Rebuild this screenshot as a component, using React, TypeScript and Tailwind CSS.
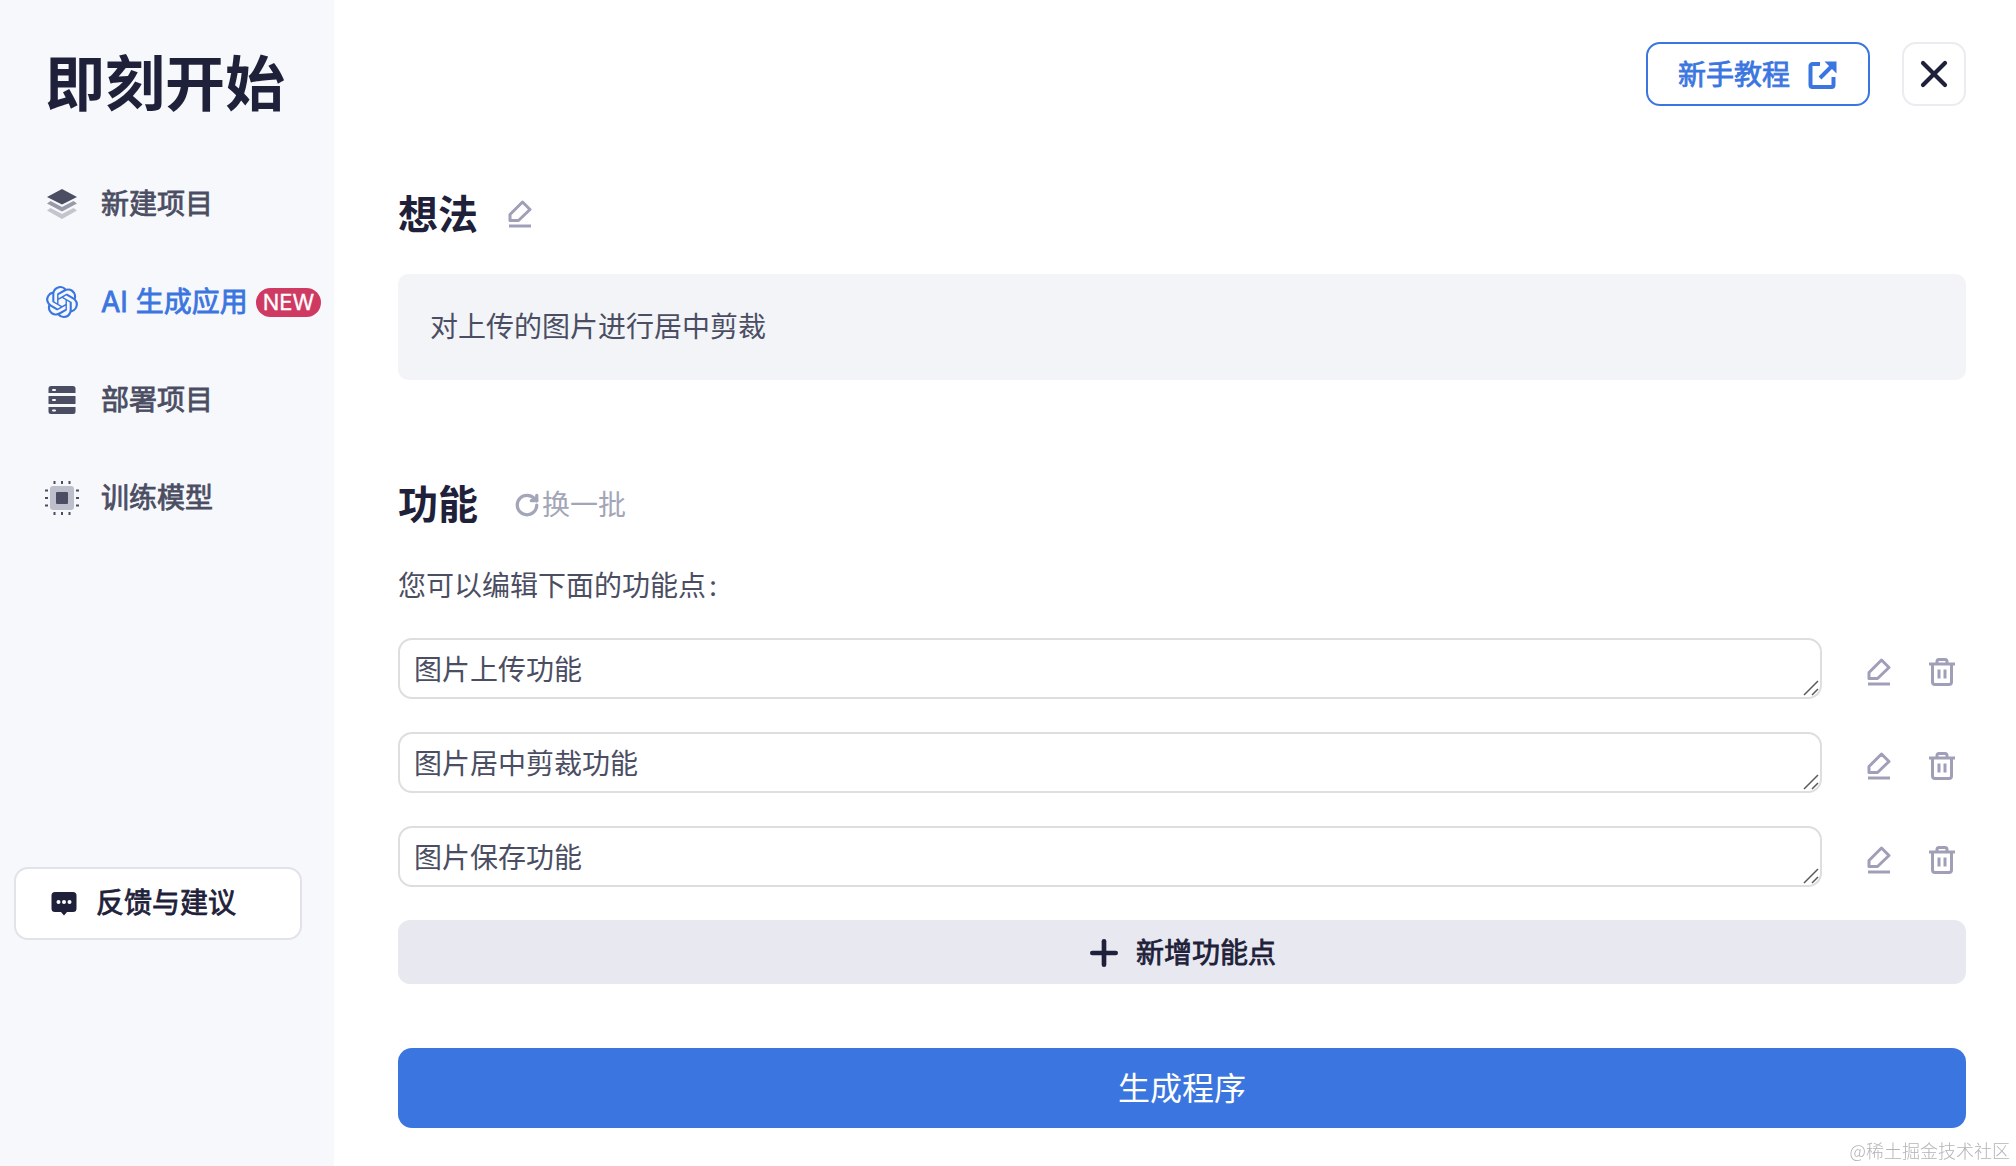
import { RotateCw, X, Plus } from 'lucide-react'
import { SiOpenai } from 'react-icons/si'

const font = { cjk: "font-['Inter','Noto_Sans_CJK_SC',sans-serif]" }
const medium = '[-webkit-text-stroke:0.8px_currentColor]'

function LayersIcon() {
  return (
    <svg width="32" height="32" viewBox="0 0 32 32" fill="#4b4e63">
      <path d="M16 1 31 9 16 16.500 1 9z" />
      <path d="M4.500 13 16 19 27.500 13 31 15.500 16 23.500 1 15.500z" opacity="0.55" />
      <path d="M4.500 20 16 26 27.500 20 31 22.500 16 31 1 22.500z" opacity="0.3" />
    </svg>
  )
}

function ServerIcon() {
  return (
    <svg width="28" height="30" viewBox="0 0 28 30" fill="#4b4e63">
      <path d="M3 1h22a2.500 2.500 0 0 1 2.500 2.500V8H.5V3.500A2.500 2.500 0 0 1 3 1z" />
      <rect x="0.500" y="11" width="27" height="8" />
      <path d="M.5 22h27v4.500A2.500 2.500 0 0 1 25 29H3a2.500 2.500 0 0 1-2.500-2.500z" />
      <g fill="#f7f8fb">
        <rect x="4" y="4" width="4" height="2" rx="1" />
        <rect x="4" y="14" width="4" height="2" rx="1" />
        <rect x="4" y="24.500" width="4" height="2" rx="1" />
      </g>
    </svg>
  )
}

function ChipIcon() {
  return (
    <svg width="34" height="34" viewBox="0 0 34 34">
      <rect x="5" y="5" width="24" height="24" rx="3" fill="#bdbfcb" />
      <rect x="11" y="11" width="12" height="12" rx="1" fill="#4b4e63" />
      <g stroke="#4b4e63" strokeWidth="2">
        <path d="M9.500 0v3M17 0v3M24.500 0v3M9.500 31v3M17 31v3M24.500 31v3M0 9.500h3M0 17h3M0 24.500h3M31 9.500h3M31 17h3M31 24.500h3" />
      </g>
    </svg>
  )
}

function ChatIcon() {
  return (
    <svg width="26" height="26" viewBox="0 0 26 26">
      <path d="M4 2h18a3.500 3.500 0 0 1 3.500 3.500v13A3.500 3.500 0 0 1 22 22h-6l-3 3.500L10 22H4a3.500 3.500 0 0 1-3.500-3.500v-13A3.500 3.500 0 0 1 4 2z" fill="#1e2139" />
      <circle cx="7.500" cy="12" r="2" fill="#fff" />
      <circle cx="13" cy="12" r="2" fill="#fff" />
      <circle cx="18.500" cy="12" r="2" fill="#fff" />
    </svg>
  )
}

function ExternalIcon() {
  return (
    <svg width="30" height="30" viewBox="0 0 30 30" fill="none" stroke="#3b76e0" strokeWidth="4">
      <path d="M12 4H4.500a2 2 0 0 0-2 2v19a2 2 0 0 0 2 2h19a2 2 0 0 0 2-2V17" />
      <path d="M12 18 25 5" />
      <path d="M16.500 1.500h12v12z" fill="#3b76e0" stroke="none" />
    </svg>
  )
}

function PencilIcon() {
  return (
    <svg width="24" height="28" viewBox="0 0 24 28" fill="none" stroke="#a09fb8" strokeWidth="3">
      <path d="M2 20.500v-6L14.500 2l7.500 7.500L10.500 20.500z" strokeLinejoin="round" />
      <path d="M1 26h22" />
    </svg>
  )
}

function TrashIcon() {
  return (
    <svg width="26" height="28" viewBox="0 0 26 28" fill="none" stroke="#a09fb8" strokeWidth="3">
      <path d="M0 6h26" />
      <path d="M8 6V3.500A2 2 0 0 1 10 1.500h6a2 2 0 0 1 2 2V6" />
      <path d="M3.500 6v18a2.500 2.500 0 0 0 2.500 2.500h14a2.500 2.500 0 0 0 2.500-2.500V6" />
      <path d="M10 11.500v9M16 11.500v9" />
    </svg>
  )
}

function ResizeGrip() {
  return (
    <svg width="16" height="16" viewBox="0 0 16 16" stroke="#5a5a5a" strokeWidth="1.500" className="pointer-events-none absolute bottom-[3px] right-[3px]">
      <path d="M1 15 15 1M9 15l6-6" />
    </svg>
  )
}

const features = ['图片上传功能', '图片居中剪裁功能', '图片保存功能']

export default function App() {
  return (
    <div className={`flex h-screen overflow-hidden bg-white ${font.cjk}`}>
      <aside className="flex w-[334px] shrink-0 flex-col bg-[#f7f8fb]">
        <h1 className="ml-[45px] mt-[54px] text-[60px] font-bold leading-[60px] text-[#1e2139]">即刻开始</h1>
        <nav className={`mt-[41px] flex flex-col text-[28px] text-[#4b4e63] ${medium}`}>
          <div className="flex h-[98px] items-center">
            <div className="ml-[46px] flex w-[55px] items-center"><LayersIcon /></div>
            <span>新建项目</span>
          </div>
          <div className="flex h-[98px] items-center text-[#3b76e0]">
            <div className="ml-[46px] flex w-[55px] items-center"><SiOpenai size={32} color="#3b76e0" /></div>
            <span>AI 生成应用</span>
            <span className="ml-[8px] flex h-[29px] items-center rounded-full bg-[#cf3a62] px-[7px] text-[22px] text-white [-webkit-text-stroke:0.3px_white]">NEW</span>
          </div>
          <div className="flex h-[98px] items-center">
            <div className="ml-[48px] flex w-[53px] items-center"><ServerIcon /></div>
            <span>部署项目</span>
          </div>
          <div className="flex h-[98px] items-center">
            <div className="ml-[45px] flex w-[56px] items-center"><ChipIcon /></div>
            <span>训练模型</span>
          </div>
        </nav>
        <button className={`mb-[226px] ml-[14px] mt-auto flex h-[73px] w-[288px] items-center rounded-[14px] border-2 border-[#e2e2e8] bg-white pb-[2px] pl-[35px] text-[28px] text-[#1e2139] ${medium}`}>
          <ChatIcon />
          <span className="ml-[19px]">反馈与建议</span>
        </button>
      </aside>

      <main className="flex min-w-0 flex-1 flex-col pl-[64px] pr-[50px]">
        <div className="mt-[42px] flex justify-end gap-[32px]">
          <button className={`flex h-[64px] w-[224px] items-center justify-center gap-[18px] rounded-[14px] border-2 border-[#3b76e0] pt-[1px] text-[28px] text-[#3b76e0] ${medium}`}>
            <span>新手教程</span>
            <ExternalIcon />
          </button>
          <button className="flex h-[64px] w-[64px] items-center justify-center rounded-[14px] border-2 border-[#ececf0] text-[#1e2139]">
            <X size={44} strokeWidth={2.3} />
          </button>
        </div>

        <div className="mt-[81px] flex h-[56px] items-center">
          <h2 className="text-[40px] font-bold text-[#1e2139]">想法</h2>
          <div className="ml-[30px] -mt-[2px]"><PencilIcon /></div>
        </div>
        <div className="mt-[31px] flex h-[106px] items-center rounded-[10px] bg-[#f2f4f8] pl-[32px] text-[28px] text-[#4b4e63]">
          对上传的图片进行居中剪裁
        </div>

        <div className="mt-[97px] flex h-[56px] items-center">
          <h2 className="text-[40px] font-bold text-[#1e2139]">功能</h2>
          <div className="ml-[36px] flex items-center gap-[2px] text-[28px] text-[#a3a5b8]">
            <RotateCw size={26} strokeWidth={3} className="-scale-y-100 rotate-180 scale-x-[-1]" />
            <span>换一批</span>
          </div>
        </div>
        <p className="mt-[33px] text-[28px] leading-[40px] text-[#4b4e63]">您可以编辑下面的功能点<span className="ml-[3px]">:</span></p>

        <div className="mt-[32px] flex flex-col gap-[33px]">
          {features.map((feature) => (
            <div key={feature} className="flex">
              <div className="relative flex min-w-0 flex-1">
                <textarea
                  defaultValue={feature}
                  className="h-[61px] min-w-0 flex-1 resize-none rounded-[14px] border-2 border-[#dedede] bg-white px-[14px] pb-[4px] pt-[10px] text-[28px] leading-[40px] text-[#4b4e63] outline-none"
                />
                <ResizeGrip />
              </div>
              <div className="flex w-[144px] shrink-0 items-center justify-end gap-[38px] pr-[11px] pt-[7px]">
                <PencilIcon />
                <TrashIcon />
              </div>
            </div>
          ))}
        </div>

        <button className={`mt-[33px] flex h-[64px] shrink-0 items-center justify-center gap-[12px] rounded-[12px] bg-[#e8e9f0] pr-[4px] pt-[2px] text-[28px] text-[#1e2139] ${medium}`}>
          <Plus size={40} strokeWidth={2.8} />
          <span>新增功能点</span>
        </button>
        <button className="mt-[64px] h-[80px] shrink-0 rounded-[14px] bg-[#3b76e0] pt-[2px] text-[32px] text-white">生成程序</button>
      </main>

      <span className="fixed bottom-[5px] right-[6px] font-['Noto_Sans_CJK_SC',sans-serif] text-[18px] font-light leading-[22px] text-[#b4b4b4]">@稀土掘金技术社区</span>
    </div>
  )
}
